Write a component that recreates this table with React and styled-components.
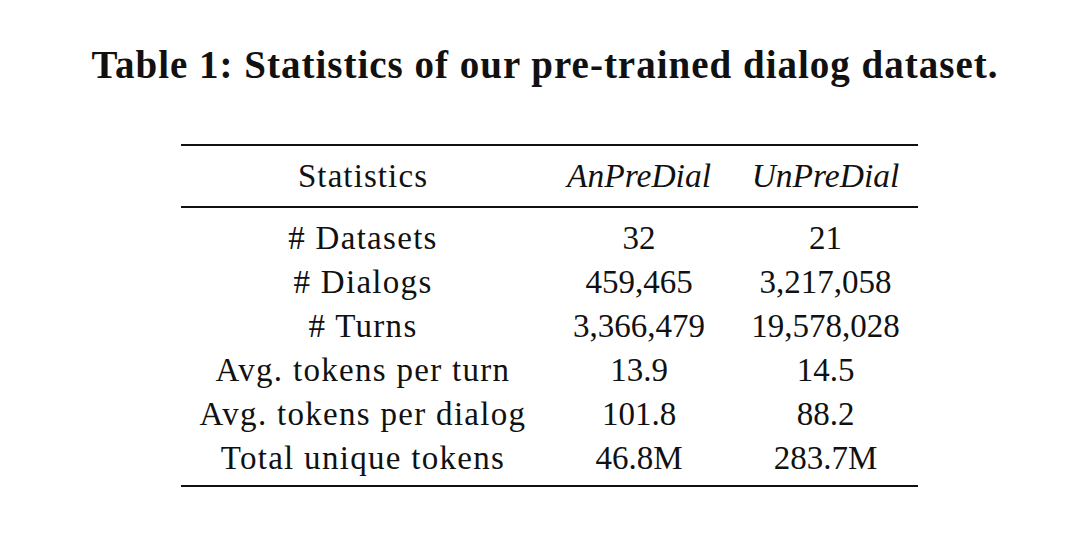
import React from "react";
import styled, { createGlobalStyle } from "styled-components";

const Global = createGlobalStyle`
  html, body { margin: 0; padding: 0; background: #ffffff; }
  body { font-family: "Liberation Serif", "DejaVu Serif", serif; color: #111111; }
`;

const Page = styled.div`
  width: 1080px;
  height: 537px;
  background: #ffffff;
  display: flex;
  flex-direction: column;
  overflow: hidden;
`;

const Caption = styled.h1`
  margin: 44px 0 0 0;
  padding-left: 10px;
  text-align: center;
  font-size: 39px;
  line-height: 42px;
  letter-spacing: 1px;
  font-weight: 700;
  color: #111111;
`;

const Table = styled.table`
  margin: 58px 0 0 181px;
  width: 737px;
  border-collapse: collapse;
  border-top: 2px solid #111111;
  border-bottom: 2px solid #111111;
  font-size: 33px;
  line-height: 44px;
  table-layout: fixed;
`;

const Head = styled.thead`
  border-bottom: 2px solid #111111;
`;

const HCell = styled.th`
  font-weight: 400;
  font-style: ${(p) => (p.$italic ? "italic" : "normal")};
  font-size: ${(p) => (p.$italic ? "33.5px" : "33px")};
  letter-spacing: ${(p) => (p.$italic ? "0" : "1.1px")};
  text-align: center;
  padding: 8px 0 8px 0;
  width: ${(p) => p.$w}px;
  white-space: nowrap;
`;

const Cell = styled.td`
  text-align: center;
  letter-spacing: ${(p) => (p.$label ? "1.3px" : "0")};
  padding: ${(p) => (p.$first ? "8px 0 0 0" : p.$last ? "0 0 5px 0" : "0")};
  white-space: nowrap;
`;

const rows = [
  ["# Datasets", "32", "21"],
  ["# Dialogs", "459,465", "3,217,058"],
  ["# Turns", "3,366,479", "19,578,028"],
  ["Avg. tokens per turn", "13.9", "14.5"],
  ["Avg. tokens per dialog", "101.8", "88.2"],
  ["Total unique tokens", "46.8M", "283.7M"],
];

export default function App() {
  return (
    <Page>
      <Global />
      <Caption>Table 1: Statistics of our pre-trained dialog dataset.</Caption>
      <Table>
        <Head>
          <tr>
            <HCell $w={364}>Statistics</HCell>
            <HCell $w={188} $italic>AnPreDial</HCell>
            <HCell $w={185} $italic>UnPreDial</HCell>
          </tr>
        </Head>
        <tbody>
          {rows.map((r, i) => (
            <tr key={r[0]}>
              {r.map((c, j) => (
                <Cell
                  key={j}
                  $label={j === 0}
                  $first={i === 0}
                  $last={i === rows.length - 1}
                >
                  {c}
                </Cell>
              ))}
            </tr>
          ))}
        </tbody>
      </Table>
    </Page>
  );
}
